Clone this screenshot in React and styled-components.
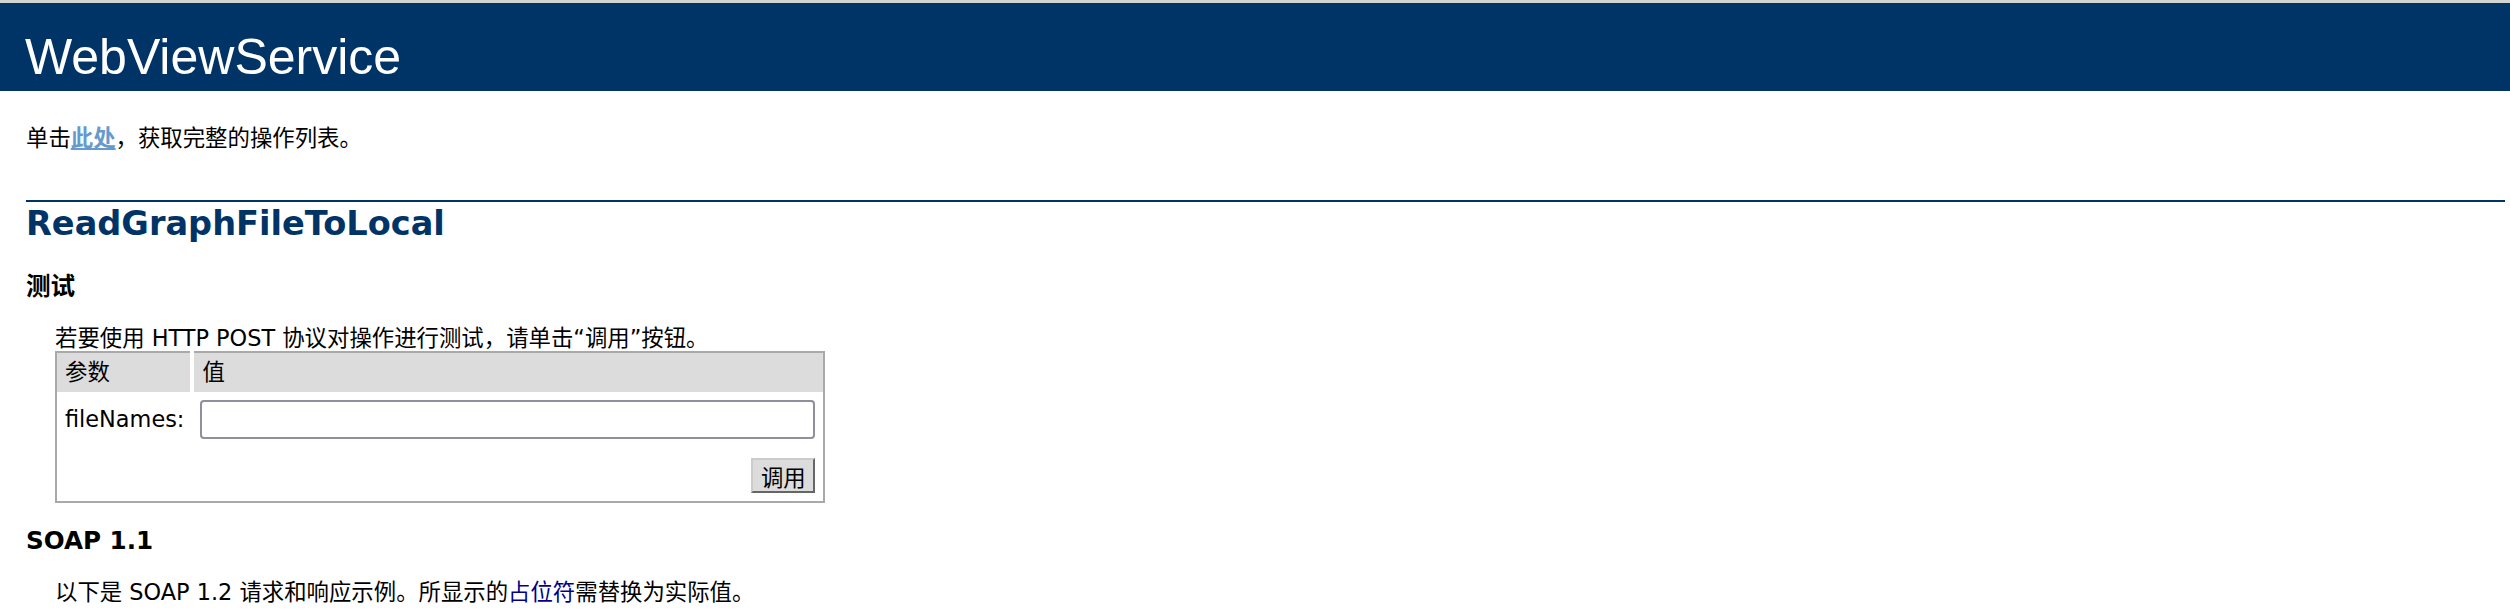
import React from 'react';
import styled, { createGlobalStyle } from 'styled-components';

const GlobalStyle = createGlobalStyle`
  html, body {
    margin: 0;
    padding: 0;
    background: #fff;
  }
  body {
    border-top: 3px solid #d4d4d4;
    color: #000;
    font-family: "DejaVu Sans", Verdana, "Noto Sans CJK SC", sans-serif;
    overflow: hidden;
  }
`;

const App = () => {
  return (
    <>
      <GlobalStyle />
      <Heading>WebViewService</Heading>
      <Content>
        <Intro>
          单击<Link href="#">此处</Link>，获取完整的操作列表。
        </Intro>
        <OpTitle>ReadGraphFileToLocal</OpTitle>
        <SubTitle $top={26}>测试</SubTitle>
        <Line>若要使用 HTTP POST 协议对操作进行测试，请单击“调用”按钮。</Line>
        <form onSubmit={(e) => e.preventDefault()}>
          <ParamTable>
            <tbody>
              <tr>
                <HeadCell $divider>参数</HeadCell>
                <HeadCell>值</HeadCell>
              </tr>
              <tr>
                <LabelCell>fileNames:</LabelCell>
                <Cell>
                  <TextInput type="text" name="fileNames" />
                </Cell>
              </tr>
              <tr>
                <Cell />
                <Cell>
                  <ButtonRow>
                    <InvokeButton type="submit">调用</InvokeButton>
                  </ButtonRow>
                </Cell>
              </tr>
            </tbody>
          </ParamTable>
        </form>
        <SubTitle $top={23}>SOAP 1.1</SubTitle>
        <Para>
          以下是 SOAP 1.2 请求和响应示例。所显示的<Value>占位符</Value>需替换为实际值。
        </Para>
      </Content>
    </>
  );
};

export default App;

const Heading = styled.div`
  background-color: #003366;
  color: #fff;
  font-family: "Liberation Sans", Tahoma, sans-serif;
  font-size: 50px;
  height: 88px;
  box-sizing: border-box;
  padding: 25px 0 0 25px;
  line-height: 58px;
`;

const Content = styled.div`
  margin: 0 5px 0 55px;
  font-size: 22.4px;
  line-height: 26px;
`;

const Intro = styled.p`
  margin: 34px 0 0 -29px;
`;

const Link = styled.a`
  color: #6699cc;
  font-weight: bold;
  text-decoration: underline;
`;

const OpTitle = styled.h2`
  margin: 49px 0 0 -29px;
  border-top: 2px solid #003366;
  color: #003366;
  font-size: 33.6px;
  line-height: 44px;
  font-weight: bold;
`;

const SubTitle = styled.h3`
  margin: ${(p) => p.$top}px 0 0 -29px;
  font-size: 24.6px;
  line-height: 30px;
  font-weight: bold;
`;

const Line = styled.div`
  margin-top: 23px;
`;

const ParamTable = styled.table`
  border-collapse: collapse;
  border: 2px solid #a9a9a9;
  font-size: 22.4px;
`;

const HeadCell = styled.td`
  background: #dcdcdc;
  padding: 8px;
  line-height: 23px;
  text-align: left;
  border-right: ${(p) => (p.$divider ? '4px solid #fff' : 'none')};
`;

const LabelCell = styled.td`
  padding: 8px;
  line-height: 23px;
  vertical-align: middle;
`;

const Cell = styled.td`
  padding: 8px;
`;

const TextInput = styled.input`
  display: block;
  box-sizing: border-box;
  width: 615px;
  height: 39px;
  border: 2px solid #8f8f9d;
  border-radius: 4px;
  background: #fff;
  font: inherit;
`;

const ButtonRow = styled.div`
  display: flex;
  justify-content: flex-end;
  padding-top: 3px;
`;

const InvokeButton = styled.button`
  box-sizing: border-box;
  width: 64px;
  height: 35px;
  padding: 0;
  background: #dcdcdc;
  font-family: inherit;
  font-size: 22.4px;
  color: #000;
  border-top: 2px solid #cccccc;
  border-left: 2px solid #cccccc;
  border-bottom: 2px solid #666666;
  border-right: 2px solid #666666;
`;

const Para = styled.p`
  margin: 23px 0 0;
`;

const Value = styled.span`
  color: #00008b;
`;
